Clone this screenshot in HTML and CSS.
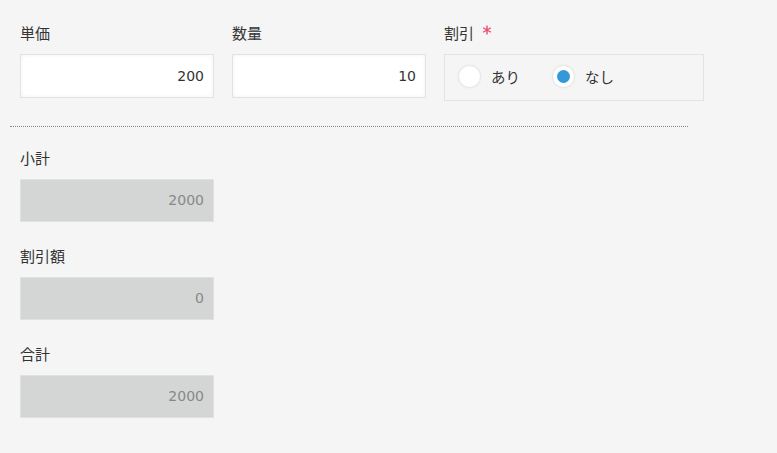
FILE: index.html
```html
<!DOCTYPE html>
<html lang="ja">
<head>
    <meta charset="UTF-8">
    <title>金額計算</title>
    <link rel="stylesheet" href="styles.css">
</head>
<body>
    <div class="form">
        <div class="row">
            <div class="field">
                <div class="label">単価</div>
                <div class="input">200</div>
            </div>
            <div class="field">
                <div class="label">数量</div>
                <div class="input">10</div>
            </div>
            <div class="field">
                <div class="label">割引<svg class="required" width="10" height="10" viewBox="0 0 10 10"><path d="M5 0.5V9.5M1.1 2.75L8.9 7.25M1.1 7.25L8.9 2.75" stroke="#e8506a" stroke-width="1.4" fill="none"/></svg></div>
                <div class="radio-group">
                    <label class="radio"><span class="circle"></span>あり</label>
                    <label class="radio checked"><span class="circle"></span>なし</label>
                </div>
            </div>
        </div>

        <hr class="separator">

        <div class="column">
            <div class="field calc">
                <div class="label">小計</div>
                <div class="input disabled">2000</div>
            </div>
            <div class="field calc">
                <div class="label">割引額</div>
                <div class="input disabled">0</div>
            </div>
            <div class="field calc">
                <div class="label">合計</div>
                <div class="input disabled">2000</div>
            </div>
        </div>
    </div>
</body>
</html>
```

FILE: styles.css
```css
body {
    margin: 0;
    background-color: #f5f5f5;
    font-family: "Noto Sans CJK JP", "Noto Sans", sans-serif;
    font-size: 14px;
    color: #333;
}
.form {
    padding: 23px 10px 0 10px;
}
.row {
    display: flex;
    gap: 18px;
    padding-left: 10px;
}
.field {
    width: 194px;
}
.label {
    height: 20px;
    line-height: 20px;
    margin-bottom: 11px;
    font-size: 15px;
    display: flex;
    align-items: center;
}
.required {
    margin-left: 8px;
    margin-top: -6px;
}
.input {
    box-sizing: border-box;
    height: 44px;
    line-height: 42px;
    padding-right: 9px;
    text-align: right;
    font-family: "DejaVu Sans", "Noto Sans CJK JP", sans-serif;
    font-size: 14px;
    background-color: #fff;
    border: 1px solid #e3e3e3;
    box-shadow: inset 0 0 4px rgba(0,0,0,0.06);
}
.input.disabled {
    height: 43px;
    line-height: 41px;
    background-color: #d4d6d5;
    border-color: #e0e2e1;
    box-shadow: none;
    color: #888;
}
.radio-group {
    box-sizing: border-box;
    width: 260px;
    height: 47px;
    margin-top: 1px;
    padding: 0 13px;
    display: flex;
    align-items: center;
    gap: 32px;
    border: 1px solid #e3e3e3;
}
.radio {
    display: flex;
    align-items: center;
    gap: 10px;
    margin-top: -3px;
    font-size: 14.5px;
}
.circle {
    box-sizing: border-box;
    width: 23px;
    height: 23px;
    border-radius: 50%;
    background-color: #fff;
    border: 1px solid #e6e6e6;
    box-shadow: 0 0 2px rgba(0,0,0,0.06);
    display: flex;
    align-items: center;
    justify-content: center;
}
.radio.checked .circle::after {
    content: "";
    width: 13px;
    height: 13px;
    border-radius: 50%;
    background-color: #3498db;
}
.separator {
    width: 678px;
    margin: 25px 0 21px 0;
    border: none;
    border-top: 1px dotted #888;
}
.column {
    display: flex;
    flex-direction: column;
    gap: 24px;
    padding-left: 10px;
}
```
